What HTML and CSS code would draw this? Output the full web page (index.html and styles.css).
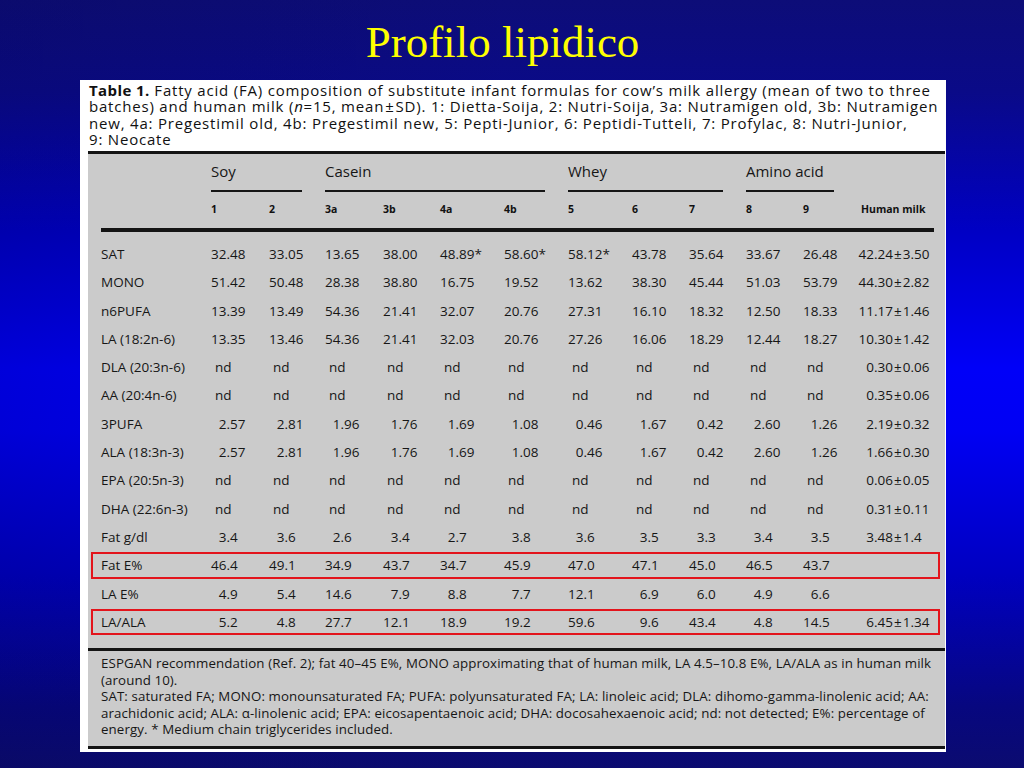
FILE: index.html
```html
<!DOCTYPE html>
<html>
<head>
<meta charset="utf-8">
<link rel="stylesheet" href="styles.css">
</head>
<body>
<h1 class="title">Profilo lipidico</h1>
<div class="figure">
  <div class="caption">
    <div class="ln"><b>Table 1.</b> Fatty acid (FA) composition of substitute infant formulas for cow’s milk allergy (mean of two to three</div>
    <div class="ln">batches) and human milk (<i>n</i>=15, mean<span class="pm">±</span>SD). 1: Dietta-Soija, 2: Nutri-Soija, 3a: Nutramigen old, 3b: Nutramigen</div>
    <div class="ln">new, 4a: Pregestimil old, 4b: Pregestimil new, 5: Pepti-Junior, 6: Peptidi-Tutteli, 7: Profylac, 8: Nutri-Junior,</div>
    <div class="ln">9: Neocate</div>
  </div>
  <div class="panel">
    <div class="tbl">
      <div class="grid groups">
        <span></span>
        <div class="grp g2"><span>Soy</span><div class="u"></div></div>
        <div class="grp g4"><span>Casein</span><div class="u"></div></div>
        <div class="grp g3"><span>Whey</span><div class="u"></div></div>
        <div class="grp g2"><span>Amino acid</span><div class="u"></div></div>
        <span></span>
      </div>
      <div class="grid colhead">
        <span></span><span>1</span><span>2</span><span>3a</span><span>3b</span><span>4a</span><span>4b</span><span>5</span><span>6</span><span>7</span><span>8</span><span>9</span><span class="hmh">Human milk</span>
      </div>
      <div class="thick"></div>
      <div class="rows">
        <div class="grid row"><span class="lab">SAT</span><span class="c"><span class="i">32</span>.48</span><span class="c"><span class="i">33</span>.05</span><span class="c"><span class="i">13</span>.65</span><span class="c"><span class="i">38</span>.00</span><span class="c"><span class="i">48</span>.89*</span><span class="c"><span class="i">58</span>.60*</span><span class="c"><span class="i">58</span>.12*</span><span class="c"><span class="i">43</span>.78</span><span class="c"><span class="i">35</span>.64</span><span class="c"><span class="i">33</span>.67</span><span class="c"><span class="i">26</span>.48</span><span class="hm"><span class="hl">42.24</span><span class="pm">±</span>3.50</span></div>
        <div class="grid row"><span class="lab">MONO</span><span class="c"><span class="i">51</span>.42</span><span class="c"><span class="i">50</span>.48</span><span class="c"><span class="i">28</span>.38</span><span class="c"><span class="i">38</span>.80</span><span class="c"><span class="i">16</span>.75</span><span class="c"><span class="i">19</span>.52</span><span class="c"><span class="i">13</span>.62</span><span class="c"><span class="i">38</span>.30</span><span class="c"><span class="i">45</span>.44</span><span class="c"><span class="i">51</span>.03</span><span class="c"><span class="i">53</span>.79</span><span class="hm"><span class="hl">44.30</span><span class="pm">±</span>2.82</span></div>
        <div class="grid row"><span class="lab">n6PUFA</span><span class="c"><span class="i">13</span>.39</span><span class="c"><span class="i">13</span>.49</span><span class="c"><span class="i">54</span>.36</span><span class="c"><span class="i">21</span>.41</span><span class="c"><span class="i">32</span>.07</span><span class="c"><span class="i">20</span>.76</span><span class="c"><span class="i">27</span>.31</span><span class="c"><span class="i">16</span>.10</span><span class="c"><span class="i">18</span>.32</span><span class="c"><span class="i">12</span>.50</span><span class="c"><span class="i">18</span>.33</span><span class="hm"><span class="hl">11.17</span><span class="pm">±</span>1.46</span></div>
        <div class="grid row"><span class="lab">LA (18:2n-6)</span><span class="c"><span class="i">13</span>.35</span><span class="c"><span class="i">13</span>.46</span><span class="c"><span class="i">54</span>.36</span><span class="c"><span class="i">21</span>.41</span><span class="c"><span class="i">32</span>.03</span><span class="c"><span class="i">20</span>.76</span><span class="c"><span class="i">27</span>.26</span><span class="c"><span class="i">16</span>.06</span><span class="c"><span class="i">18</span>.29</span><span class="c"><span class="i">12</span>.44</span><span class="c"><span class="i">18</span>.27</span><span class="hm"><span class="hl">10.30</span><span class="pm">±</span>1.42</span></div>
        <div class="grid row"><span class="lab">DLA (20:3n-6)</span><span class="c nd">nd</span><span class="c nd">nd</span><span class="c nd">nd</span><span class="c nd">nd</span><span class="c nd">nd</span><span class="c nd">nd</span><span class="c nd">nd</span><span class="c nd">nd</span><span class="c nd">nd</span><span class="c nd">nd</span><span class="c nd">nd</span><span class="hm"><span class="hl">0.30</span><span class="pm">±</span>0.06</span></div>
        <div class="grid row"><span class="lab">AA (20:4n-6)</span><span class="c nd">nd</span><span class="c nd">nd</span><span class="c nd">nd</span><span class="c nd">nd</span><span class="c nd">nd</span><span class="c nd">nd</span><span class="c nd">nd</span><span class="c nd">nd</span><span class="c nd">nd</span><span class="c nd">nd</span><span class="c nd">nd</span><span class="hm"><span class="hl">0.35</span><span class="pm">±</span>0.06</span></div>
        <div class="grid row"><span class="lab">3PUFA</span><span class="c"><span class="i">2</span>.57</span><span class="c"><span class="i">2</span>.81</span><span class="c"><span class="i">1</span>.96</span><span class="c"><span class="i">1</span>.76</span><span class="c"><span class="i">1</span>.69</span><span class="c"><span class="i">1</span>.08</span><span class="c"><span class="i">0</span>.46</span><span class="c"><span class="i">1</span>.67</span><span class="c"><span class="i">0</span>.42</span><span class="c"><span class="i">2</span>.60</span><span class="c"><span class="i">1</span>.26</span><span class="hm"><span class="hl">2.19</span><span class="pm">±</span>0.32</span></div>
        <div class="grid row"><span class="lab">ALA (18:3n-3)</span><span class="c"><span class="i">2</span>.57</span><span class="c"><span class="i">2</span>.81</span><span class="c"><span class="i">1</span>.96</span><span class="c"><span class="i">1</span>.76</span><span class="c"><span class="i">1</span>.69</span><span class="c"><span class="i">1</span>.08</span><span class="c"><span class="i">0</span>.46</span><span class="c"><span class="i">1</span>.67</span><span class="c"><span class="i">0</span>.42</span><span class="c"><span class="i">2</span>.60</span><span class="c"><span class="i">1</span>.26</span><span class="hm"><span class="hl">1.66</span><span class="pm">±</span>0.30</span></div>
        <div class="grid row"><span class="lab">EPA (20:5n-3)</span><span class="c nd">nd</span><span class="c nd">nd</span><span class="c nd">nd</span><span class="c nd">nd</span><span class="c nd">nd</span><span class="c nd">nd</span><span class="c nd">nd</span><span class="c nd">nd</span><span class="c nd">nd</span><span class="c nd">nd</span><span class="c nd">nd</span><span class="hm"><span class="hl">0.06</span><span class="pm">±</span>0.05</span></div>
        <div class="grid row"><span class="lab">DHA (22:6n-3)</span><span class="c nd">nd</span><span class="c nd">nd</span><span class="c nd">nd</span><span class="c nd">nd</span><span class="c nd">nd</span><span class="c nd">nd</span><span class="c nd">nd</span><span class="c nd">nd</span><span class="c nd">nd</span><span class="c nd">nd</span><span class="c nd">nd</span><span class="hm"><span class="hl">0.31</span><span class="pm">±</span>0.11</span></div>
        <div class="grid row"><span class="lab">Fat g/dl</span><span class="c"><span class="i">3</span>.4</span><span class="c"><span class="i">3</span>.6</span><span class="c"><span class="i">2</span>.6</span><span class="c"><span class="i">3</span>.4</span><span class="c"><span class="i">2</span>.7</span><span class="c"><span class="i">3</span>.8</span><span class="c"><span class="i">3</span>.6</span><span class="c"><span class="i">3</span>.5</span><span class="c"><span class="i">3</span>.3</span><span class="c"><span class="i">3</span>.4</span><span class="c"><span class="i">3</span>.5</span><span class="hm"><span class="hl">3.48</span><span class="pm">±</span>1.4</span></div>
        <div class="grid row mark"><span class="lab">Fat E%</span><span class="c"><span class="i">46</span>.4</span><span class="c"><span class="i">49</span>.1</span><span class="c"><span class="i">34</span>.9</span><span class="c"><span class="i">43</span>.7</span><span class="c"><span class="i">34</span>.7</span><span class="c"><span class="i">45</span>.9</span><span class="c"><span class="i">47</span>.0</span><span class="c"><span class="i">47</span>.1</span><span class="c"><span class="i">45</span>.0</span><span class="c"><span class="i">46</span>.5</span><span class="c"><span class="i">43</span>.7</span><span class="hm"></span></div>
        <div class="grid row"><span class="lab">LA E%</span><span class="c"><span class="i">4</span>.9</span><span class="c"><span class="i">5</span>.4</span><span class="c"><span class="i">14</span>.6</span><span class="c"><span class="i">7</span>.9</span><span class="c"><span class="i">8</span>.8</span><span class="c"><span class="i">7</span>.7</span><span class="c"><span class="i">12</span>.1</span><span class="c"><span class="i">6</span>.9</span><span class="c"><span class="i">6</span>.0</span><span class="c"><span class="i">4</span>.9</span><span class="c"><span class="i">6</span>.6</span><span class="hm"></span></div>
        <div class="grid row mark"><span class="lab">LA/ALA</span><span class="c"><span class="i">5</span>.2</span><span class="c"><span class="i">4</span>.8</span><span class="c"><span class="i">27</span>.7</span><span class="c"><span class="i">12</span>.1</span><span class="c"><span class="i">18</span>.9</span><span class="c"><span class="i">19</span>.2</span><span class="c"><span class="i">59</span>.6</span><span class="c"><span class="i">9</span>.6</span><span class="c"><span class="i">43</span>.4</span><span class="c"><span class="i">4</span>.8</span><span class="c"><span class="i">14</span>.5</span><span class="hm"><span class="hl">6.45</span><span class="pm">±</span>1.34</span></div>
      </div>
    </div>
    <div class="midrule"></div>
    <div class="notes">
      <div class="ln">ESPGAN recommendation (Ref. 2); fat 40–45 E%, MONO approximating that of human milk, LA 4.5–10.8 E%, LA/ALA as in human milk</div>
      <div class="ln">(around 10).</div>
      <div class="ln">SAT: saturated FA; MONO: monounsaturated FA; PUFA: polyunsaturated FA; LA: linoleic acid; DLA: dihomo-gamma-linolenic acid; AA:</div>
      <div class="ln">arachidonic acid; ALA: α-linolenic acid; EPA: eicosapentaenoic acid; DHA: docosahexaenoic acid; nd: not detected; E%: percentage of</div>
      <div class="ln">energy. * Medium chain triglycerides included.</div>
    </div>
  </div>
</div>
</body>
</html>
```

FILE: styles.css
```css
* { box-sizing: border-box; }
html, body { margin: 0; padding: 0; }
body {
  width: 1024px;
  height: 768px;
  overflow: hidden;
  font-family: "Open Sans", "Noto Sans", sans-serif;
  color: #161616;
  background:
    linear-gradient(to right, rgba(0, 0, 50, 0.15) 0%, rgba(0, 0, 50, 0) 50%),
    linear-gradient(to bottom, #0d0d78 0%, #0a0a88 12%, #0000c4 30%, #0000f8 48%, #0000f4 56%, #0000c0 75%, #07077f 92%, #0b0b70 100%);
}
.title {
  margin: 0;
  padding: 17px 19px 0 0;
  font: normal 45px/50px "Liberation Serif", serif;
  color: #ffff00;
  text-align: center;
}
.figure {
  margin: 13px 0 0 80px;
  width: 866px;
  height: 672px;
  background: #fff;
  padding: 2px 1px 3px 8px;
}
.caption {
  height: 69px;
  padding-left: 1px;
  font-size: 15px;
  letter-spacing: 0.8px;
  line-height: 16.4px;
  color: #111;
}
.caption b { letter-spacing: 0.4px; }
.ln { white-space: nowrap; }
.pm { margin: 0 1px; }
.panel {
  height: 598px;
  background: #cbcbcb;
  border-top: 3px solid #141414;
  border-bottom: 3px solid #141414;
}
.tbl { padding: 0 11px 0 13px; }
.grid {
  display: grid;
  grid-template-columns: 110px 58px 56px 58px 57px 64px 64px 64px 57px 57px 57px 54px 77px;
}
.groups {
  padding-top: 7px;
  font-size: 15px;
  line-height: 20px;
}
.g2 { grid-column: span 2; }
.g3 { grid-column: span 3; }
.g4 { grid-column: span 4; }
.grp .u {
  height: 2px;
  background: #151515;
  margin: 9px 23px 0 0;
}
.colhead {
  margin-top: 10px;
  font-size: 10.5px;
  font-weight: 700;
  line-height: 14px;
  color: #111;
}
.hmh { padding-left: 4px; }
.thick {
  margin-top: 12px;
  height: 4px;
  background: #141414;
}
.rows { margin-top: 8px; }
.row {
  height: 28.3px;
  font-size: 13.5px;
  line-height: 28.3px;
  white-space: nowrap;
}
.row.mark { position: relative; }
.row.mark::after {
  content: "";
  position: absolute;
  left: -10px;
  right: -6px;
  top: 1px;
  bottom: 1px;
  border: 2px solid #e3141c;
}
.c .i {
  display: inline-block;
  min-width: 2ch;
  text-align: right;
}
.c.nd { padding-left: 4px; }
.hl {
  display: inline-block;
  width: 36px;
  text-align: right;
}
.midrule {
  margin-top: 12px;
  height: 3px;
  background: #141414;
}
.notes {
  padding: 4px 11px 0 13px;
  font-size: 13.3px;
  letter-spacing: 0.1px;
  line-height: 16.5px;
}
```
